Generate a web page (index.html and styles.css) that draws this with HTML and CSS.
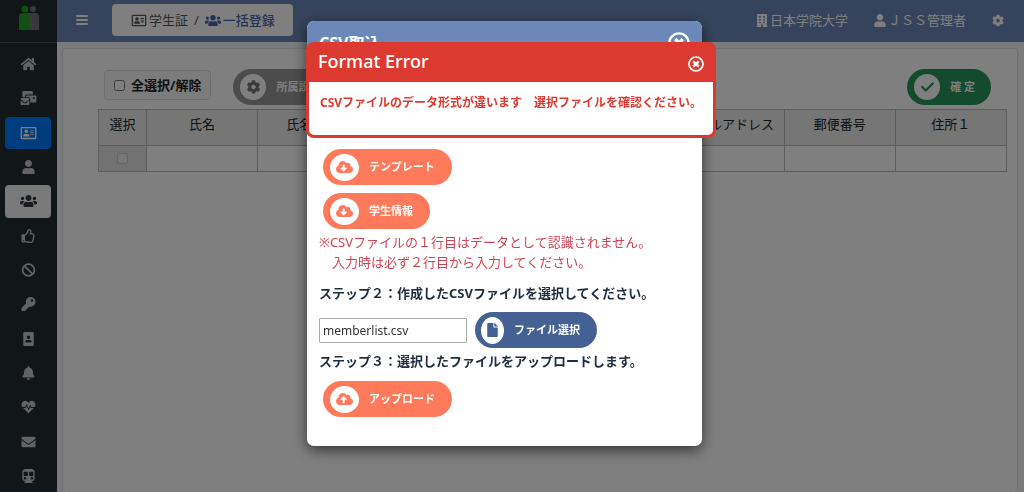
FILE: index.html
```html
<!DOCTYPE html>
<html lang="ja">
<head>
<meta charset="utf-8">
<title>一括登録</title>
<link rel="stylesheet" href="styles.css">
</head>
<body>
<svg class="sprite" aria-hidden="true">
  <symbol id="home" viewBox="0 0 576 512"><path d="M280.37 148.26L96 300.11V464a16 16 0 0 0 16 16l112.06-.29a16 16 0 0 0 15.92-16V368a16 16 0 0 1 16-16h64a16 16 0 0 1 16 16v95.64a16 16 0 0 0 16 16.05L464 480a16 16 0 0 0 16-16V300L295.67 148.26a12.19 12.19 0 0 0-15.3 0zM571.6 251.47L488 182.56V44.05a12 12 0 0 0-12-12h-56a12 12 0 0 0-12 12v72.61L318.47 43a48 48 0 0 0-61 0L4.34 251.47a12 12 0 0 0-1.6 16.9l25.5 31A12 12 0 0 0 45.15 301l235.22-193.74a12.19 12.19 0 0 1 15.3 0L530.9 301a12 12 0 0 0 16.9-1.6l25.5-31a12 12 0 0 0-1.7-16.93z"/></symbol>
  <symbol id="mails" viewBox="0 0 576 512"><path d="M160 448c-25.6 0-51.2-22.4-64-32-64-44.8-83.2-60.8-96-70.4V480c0 17.67 14.33 32 32 32h256c17.67 0 32-14.33 32-32V345.6c-12.8 9.6-32 25.6-96 70.4-12.8 9.6-38.4 32-64 32zm128-192H32c-17.67 0-32 14.33-32 32v16c25.6 19.2 22.4 19.2 115.2 86.4 9.6 6.4 28.8 25.6 44.8 25.6s35.2-19.2 44.8-22.4c92.8-67.2 89.6-67.2 115.2-86.4V288c0-17.67-14.33-32-32-32zm256-96H224c-17.67 0-32 14.33-32 32v32h96c33.21 0 60.59 25.42 63.71 57.82l.29-.22V416h192c17.67 0 32-14.33 32-32V192c0-17.67-14.33-32-32-32zm-32 128h-64v-64h64v64zm-352-96c0-35.29 28.71-64 64-64h224V32c0-17.67-14.33-32-32-32H96C78.33 0 64 14.33 64 32v192h96v-32z"/></symbol>
  <symbol id="card" viewBox="0 0 576 512"><path d="M528 32H48C21.5 32 0 53.5 0 80v352c0 26.5 21.5 48 48 48h480c26.5 0 48-21.5 48-48V80c0-26.5-21.5-48-48-48zm0 400H48V80h480v352zM208 256c35.3 0 64-28.7 64-64s-28.7-64-64-64-64 28.7-64 64 28.7 64 64 64zm-89.6 128h179.2c12.4 0 22.4-8.6 22.4-19.2v-19.2c0-31.8-30.1-57.6-67.2-57.6-10.8 0-18.7 8-44.8 8-26.9 0-33.4-8-44.8-8-37.1 0-67.2 25.8-67.2 57.6v19.2c0 10.6 10 19.2 22.4 19.2zM360 320h112c4.4 0 8-3.6 8-8v-16c0-4.4-3.6-8-8-8H360c-4.4 0-8 3.6-8 8v16c0 4.4 3.6 8 8 8zm0-64h112c4.4 0 8-3.6 8-8v-16c0-4.4-3.6-8-8-8H360c-4.4 0-8 3.6-8 8v16c0 4.4 3.6 8 8 8zm0-64h112c4.4 0 8-3.6 8-8v-16c0-4.4-3.6-8-8-8H360c-4.4 0-8 3.6-8 8v16c0 4.4 3.6 8 8 8z"/></symbol>
  <symbol id="user" viewBox="0 0 448 512"><path d="M224 256c70.7 0 128-57.3 128-128S294.7 0 224 0 96 57.3 96 128s57.3 128 128 128zm89.6 32h-16.7c-22.2 10.2-46.9 16-72.9 16s-50.6-5.8-72.9-16h-16.7C60.2 288 0 348.2 0 422.4V464c0 26.5 21.5 48 48 48h352c26.5 0 48-21.5 48-48v-41.6c0-74.2-60.2-134.4-134.4-134.4z"/></symbol>
  <symbol id="users" viewBox="0 0 640 512"><path d="M96 224c35.3 0 64-28.7 64-64s-28.7-64-64-64-64 28.7-64 64 28.7 64 64 64zm448 0c35.3 0 64-28.7 64-64s-28.7-64-64-64-64 28.7-64 64 28.7 64 64 64zm32 32h-64c-17.6 0-33.5 7.1-45.1 18.6 40.3 22.1 68.9 62 75.1 109.4h66c17.7 0 32-14.3 32-32v-32c0-35.3-28.7-64-64-64zm-256 0c61.9 0 112-50.1 112-112S381.9 32 320 32 208 82.1 208 144s50.1 112 112 112zm76.8 32h-8.3c-20.8 10-43.9 16-68.5 16s-47.6-6-68.5-16h-8.3C179.6 288 128 339.6 128 403.2V432c0 26.5 21.5 48 48 48h288c26.5 0 48-21.5 48-48v-28.8c0-63.6-51.6-115.2-115.2-115.2zm-223.7-13.4C161.5 263.1 145.6 256 128 256H64c-35.3 0-64 28.7-64 64v32c0 17.7 14.3 32 32 32h65.9c6.3-47.4 34.9-87.3 75.2-109.4z"/></symbol>
  <symbol id="thumb" viewBox="0 0 512 512"><path d="M466.27 286.69C475.04 271.84 480 256 480 236.85c0-44.015-37.218-85.58-85.82-85.58H357.7c4.92-12.81 8.85-28.13 8.85-46.54C366.55 31.936 328.86 0 271.28 0c-61.607 0-58.093 94.933-71.76 108.6-22.747 22.747-49.615 66.447-68.76 83.4H32c-17.673 0-32 14.327-32 32v240c0 17.673 14.327 32 32 32h64c14.893 0 27.408-10.174 30.978-23.95 44.509 1.001 75.06 39.94 177.802 39.94 7.22 0 15.22.01 22.22.01 77.117 0 111.986-39.423 112.94-95.33 13.319-18.425 20.299-43.122 17.34-66.99 9.854-18.452 13.664-40.343 8.99-62.99zm-61.75 53.83c12.56 21.13 1.26 49.41-13.94 57.57 7.7 48.78-17.608 65.9-53.12 65.9h-37.82c-71.639 0-118.029-37.82-171.64-37.82V240h10.92c28.36 0 67.98-70.89 94.54-97.46 28.36-28.36 18.91-75.63 37.82-94.54 47.27 0 47.27 32.98 47.27 56.73 0 39.17-28.36 56.72-28.36 94.54h103.99c21.11 0 37.73 18.91 37.82 37.82.09 18.9-12.82 37.81-22.27 37.81 13.489 14.555 16.371 45.236-5.21 65.62zM88 432c0 13.255-10.745 24-24 24s-24-10.745-24-24 10.745-24 24-24 24 10.745 24 24z"/></symbol>
  <symbol id="ban" viewBox="0 0 512 512"><g fill="none" stroke="currentColor" stroke-width="64"><circle cx="256" cy="256" r="216"/><path d="M104 104l304 304"/></g></symbol>
  <symbol id="key" viewBox="0 0 512 512"><path d="M512 176.001C512 273.203 433.202 352 336 352c-11.22 0-22.19-1.062-32.827-3.069l-24.012 27.014A23.999 23.999 0 0 1 261.223 384H224v40c0 13.255-10.745 24-24 24h-40v40c0 13.255-10.745 24-24 24H24c-13.255 0-24-10.745-24-24v-78.059c0-6.365 2.529-12.47 7.029-16.971l161.802-161.802C163.108 213.814 160 195.271 160 176 160 78.798 238.797.001 335.999 0 433.488-.001 512 78.511 512 176.001zM336 128c0 26.51 21.49 48 48 48s48-21.49 48-48-21.49-48-48-48-48 21.49-48 48z"/></symbol>
  <symbol id="portrait" viewBox="0 0 384 512"><path d="M336 0H48C21.5 0 0 21.5 0 48v416c0 26.5 21.5 48 48 48h288c26.5 0 48-21.5 48-48V48c0-26.5-21.5-48-48-48zM192 128c35.3 0 64 28.7 64 64s-28.7 64-64 64-64-28.7-64-64 28.7-64 64-64zm112 236.8c0 10.6-10 19.2-22.4 19.2H102.4C90 384 80 375.4 80 364.8v-19.2c0-31.8 30.1-57.6 67.2-57.6h5c12.3 5.1 25.7 8 39.8 8s27.6-2.9 39.8-8h5c37.1 0 67.2 25.8 67.2 57.6v19.2z"/></symbol>
  <symbol id="bell" viewBox="0 0 448 512"><path d="M224 512c35.32 0 63.97-28.65 63.97-64H160.03c0 35.35 28.65 64 63.97 64zm215.39-149.71c-19.32-20.76-55.47-51.99-55.47-154.29 0-77.7-54.48-139.9-127.94-155.16V32c0-17.67-14.32-32-31.98-32s-31.98 14.33-31.98 32v20.84C118.56 68.1 64.08 130.3 64.08 208c0 102.3-36.15 133.53-55.47 154.29-6 6.45-8.66 14.16-8.61 21.71.11 16.4 12.98 32 32.1 32h383.8c19.12 0 32-15.6 32.1-32 .05-7.55-2.61-15.27-8.61-21.71z"/></symbol>
  <symbol id="heart" viewBox="0 0 512 512"><path d="M320.2 243.8l-49.7 99.4c-6 12.1-23.4 11.7-28.9-.6l-56.9-126.3-30 71.7H60.6l182.5 186.5c7.1 7.3 18.6 7.3 25.7 0L451.4 288H342.3l-22.1-44.2zM473.7 73.9l-2.4-2.5c-51.5-52.6-135.8-52.6-187.4 0L256 100l-27.9-28.5c-51.5-52.7-135.9-52.7-187.4 0l-2.4 2.4C-10.4 123.7-12.5 203 31 256h102.4l35.9-86.2c5.4-12.9 23.6-13.1 29.4-.4l58.2 129.3 49-97.9c5.9-11.8 22.7-11.8 28.6 0l27.6 55.2H481c43.5-53 41.4-132.3-7.3-182.1z"/></symbol>
  <symbol id="mail" viewBox="0 0 512 512"><path d="M502.3 190.8c3.9-3.1 9.7-.2 9.7 4.7V400c0 26.5-21.5 48-48 48H48c-26.5 0-48-21.5-48-48V195.6c0-5 5.7-7.8 9.7-4.7 22.4 17.4 52.1 39.5 154.1 113.6 21.1 15.4 56.7 47.8 92.2 47.6 35.7.3 72-32.8 92.3-47.6 102-74.1 131.6-96.3 154-113.7zM256 320c23.2.4 56.6-29.2 73.4-41.4 132.7-96.3 142.8-104.7 173.4-128.7 5.8-4.5 9.2-11.5 9.2-18.9v-19c0-26.5-21.5-48-48-48H48c-26.5 0-48 21.5-48 48v19c0 7.4 3.4 14.3 9.2 18.9 30.6 23.9 40.7 32.4 173.4 128.7 16.8 12.2 50.2 41.8 73.4 41.4z"/></symbol>
  <symbol id="train" viewBox="0 0 448 512"><path d="M448 96v256c0 51.815-61.624 96-130.022 96l62.98 49.721C386.905 502.417 383.562 512 376 512H72c-7.578 0-10.892-9.594-4.957-14.279L130.022 448C61.82 448 0 403.954 0 352V96C0 42.981 64 0 128 0h192c65 0 128 42.981 128 96zM200 232V120c0-13.255-10.745-24-24-24H72c-13.255 0-24 10.745-24 24v112c0 13.255 10.745 24 24 24h104c13.255 0 24-10.745 24-24zm200 0V120c0-13.255-10.745-24-24-24H272c-13.255 0-24 10.745-24 24v112c0 13.255 10.745 24 24 24h104c13.255 0 24-10.745 24-24zm-48 56c-26.51 0-48 21.49-48 48s21.49 48 48 48 48-21.49 48-48-21.49-48-48-48zm-256 0c-26.51 0-48 21.49-48 48s21.49 48 48 48 48-21.49 48-48-21.49-48-48-48z"/></symbol>
  <symbol id="cog" viewBox="0 0 512 512"><path d="M487.4 315.7l-42.6-24.6c4.3-23.2 4.3-47 0-70.2l42.6-24.6c4.9-2.8 7.1-8.6 5.5-14-11.1-35.6-30-67.8-54.7-94.6-3.8-4.1-10-5.1-14.8-2.3L380.8 110c-17.9-15.4-38.5-27.3-60.8-35.1V25.8c0-5.6-3.9-10.5-9.4-11.7-36.7-8.2-74.3-7.8-109.2 0-5.5 1.2-9.4 6.1-9.4 11.7V75c-22.2 7.9-42.8 19.8-60.8 35.1L88.7 85.5c-4.9-2.8-11-1.9-14.8 2.3-24.7 26.7-43.6 58.9-54.7 94.6-1.7 5.4.6 11.2 5.5 14L67.3 221c-4.3 23.2-4.3 47 0 70.2l-42.6 24.6c-4.9 2.8-7.1 8.6-5.5 14 11.1 35.6 30 67.8 54.7 94.6 3.8 4.1 10 5.1 14.8 2.3l42.6-24.6c17.9 15.4 38.5 27.3 60.8 35.1v49.2c0 5.6 3.9 10.5 9.4 11.7 36.7 8.2 74.3 7.8 109.2 0 5.5-1.2 9.4-6.1 9.4-11.7v-49.2c22.2-7.9 42.8-19.8 60.8-35.1l42.6 24.6c4.9 2.8 11 1.9 14.8-2.3 24.7-26.7 43.6-58.9 54.7-94.6 1.5-5.5-.7-11.3-5.6-14.1zM256 336c-44.1 0-80-35.9-80-80s35.9-80 80-80 80 35.9 80 80-35.9 80-80 80z"/></symbol>
  <symbol id="download" viewBox="0 0 640 512"><path d="M537.6 226.6c4.1-10.7 6.4-22.4 6.4-34.6 0-53-43-96-96-96-19.7 0-38.1 6-53.3 16.2C367 64.2 315.3 32 256 32c-88.4 0-160 71.6-160 160 0 2.7.1 5.4.2 8.1C40.2 219.8 0 273.2 0 336c0 79.5 64.5 144 144 144h368c70.7 0 128-57.3 128-128 0-61.9-44-113.6-102.4-125.4zm-132.9 88.7L299.3 420.7c-6.2 6.2-16.4 6.2-22.6 0L171.3 315.3c-10.1-10.1-2.9-27.3 11.3-27.3H248V176c0-8.8 7.2-16 16-16h48c8.8 0 16 7.2 16 16v112h65.4c14.2 0 21.4 17.2 11.3 27.3z"/></symbol>
  <symbol id="upload" viewBox="0 0 640 512"><path d="M537.6 226.6c4.1-10.7 6.4-22.4 6.4-34.6 0-53-43-96-96-96-19.7 0-38.1 6-53.3 16.2C367 64.2 315.3 32 256 32c-88.4 0-160 71.6-160 160 0 2.7.1 5.4.2 8.1C40.2 219.8 0 273.2 0 336c0 79.5 64.5 144 144 144h368c70.7 0 128-57.3 128-128 0-61.9-44-113.6-102.4-125.4zM393.4 288H328v112c0 8.8-7.2 16-16 16h-48c-8.8 0-16-7.2-16-16V288h-65.4c-14.3 0-21.4-17.2-11.3-27.3l105.4-105.4c6.2-6.2 16.4-6.2 22.6 0l105.4 105.4c10.1 10.1 2.9 27.3-11.3 27.3z"/></symbol>
  <symbol id="building" viewBox="0 0 448 512"><path fill-rule="evenodd" d="M32 0h384v480h32v32H256v-96h-64v96H0v-32h32zM112 80v64h64V80zm160 0v64h64V80zM112 192v64h64v-64zm160 0v64h64v-64zM112 304v64h64v-64zm160 0v64h64v-64z"/></symbol>
  <symbol id="file" viewBox="0 0 384 512"><path d="M224 136V0H24C11 0 0 11 0 24v464c0 13 11 24 24 24h336c13 0 24-11 24-24V160H248c-13 0-24-11-24-24zm160-14v6H256V0h6c6 0 12 3 17 7l98 98c4 5 7 11 7 17z"/></symbol>
  <symbol id="check" viewBox="0 0 16 16"><path d="M2 8l4 4 8-8" fill="none" stroke="currentColor" stroke-width="2.6" stroke-linecap="round" stroke-linejoin="round"/></symbol>
  <symbol id="close" viewBox="0 0 16 16"><g fill="none" stroke="currentColor"><circle cx="8" cy="8" r="7" stroke-width="1.7"/><path d="M5.3 5.3l5.4 5.4M10.7 5.3l-5.4 5.4" stroke-width="2.4"/></g></symbol>
</svg>

<div class="app">
  <aside class="sidebar">
    <a class="brand" href="#" aria-label="トップ">
      <svg viewBox="0 0 20 26"><g fill="#6f7377"><circle cx="14" cy="4" r="3"/><path d="M10 8h6q4 0 4 4v13H10z"/></g><g fill="#1fa51f"><circle cx="6" cy="4" r="3.3"/><path d="M4 8h6v17H0V12q0-4 4-4z"/></g></svg>
    </a>
    <nav class="menu">
      <a href="#" aria-label="ホーム"><svg><use href="#home"/></svg></a>
      <a href="#" aria-label="配信"><svg><use href="#mails"/></svg></a>
      <a href="#" class="active" aria-label="学生証"><svg><use href="#card"/></svg></a>
      <a href="#" aria-label="利用者"><svg><use href="#user"/></svg></a>
      <a href="#" class="current" aria-label="一括登録"><svg><use href="#users"/></svg></a>
      <a href="#" aria-label="承認"><svg><use href="#thumb"/></svg></a>
      <a href="#" aria-label="停止"><svg><use href="#ban"/></svg></a>
      <a href="#" aria-label="鍵"><svg><use href="#key"/></svg></a>
      <a href="#" aria-label="写真"><svg><use href="#portrait"/></svg></a>
      <a href="#" aria-label="通知"><svg><use href="#bell"/></svg></a>
      <a href="#" aria-label="健康"><svg><use href="#heart"/></svg></a>
      <a href="#" aria-label="メール"><svg><use href="#mail"/></svg></a>
      <a href="#" aria-label="通学"><svg><use href="#train"/></svg></a>
    </nav>
  </aside>

  <div class="page">
    <header class="navbar">
      <button class="burger" aria-label="メニュー"><span></span><span></span><span></span></button>
      <div class="crumbs">
        <a href="#"><svg><use href="#card"/></svg>学生証</a>
        <span>/</span>
        <a href="#" class="here"><svg><use href="#users"/></svg>一括登録</a>
      </div>
      <div class="account">
        <span><svg><use href="#building"/></svg>日本学院大学</span>
        <span><svg><use href="#user"/></svg>ＪＳＳ管理者</span>
        <button class="plain" aria-label="設定"><svg><use href="#cog"/></svg></button>
      </div>
    </header>

    <main class="card">
      <div class="toolbar">
        <label class="select-all"><input type="checkbox">全選択/解除</label>
        <button class="pill gray"><i><svg><use href="#cog"/></svg></i>所属設定</button>
        <button class="pill green"><i><svg><use href="#check"/></svg></i>確 定</button>
      </div>
      <div class="scroller">
        <table>
          <colgroup><col class="c-check"><col><col class="c-narrow"><col class="c-wide"><col class="c-wide"><col><col><col><col></colgroup>
          <thead><tr><th>選択</th><th>氏名</th><th>氏名</th><th></th><th></th><th>メールアドレス</th><th>郵便番号</th><th>住所１</th><th></th></tr></thead>
          <tbody><tr><td class="pick"><input type="checkbox" disabled aria-label="行を選択"></td><td></td><td></td><td></td><td></td><td></td><td></td><td></td><td></td></tr></tbody>
        </table>
      </div>
    </main>
  </div>
</div>

<div class="overlay">
  <section class="modal" role="dialog" aria-label="CSV取込">
    <header class="modal-head"><h2>CSV取込</h2><button class="plain" aria-label="閉じる"><svg><use href="#close"/></svg></button></header>
    <div class="modal-body">
      <div class="downloads">
        <button class="pill orange"><i><svg><use href="#download"/></svg></i>テンプレート</button>
        <button class="pill orange"><i><svg><use href="#download"/></svg></i>学生情報</button>
      </div>
      <p class="note">※CSVファイルの１行目はデータとして認識されません。<br>　入力時は必ず２行目から入力してください。</p>
      <label class="step" for="csv">ステップ２：作成したCSVファイルを選択してください。</label>
      <div class="file-row">
        <input id="csv" type="text" value="memberlist.csv">
        <button class="pill blue"><i><svg><use href="#file"/></svg></i>ファイル選択</button>
      </div>
      <p class="step">ステップ３：選択したファイルをアップロードします。</p>
      <div class="uploads"><button class="pill orange"><i><svg><use href="#upload"/></svg></i>アップロード</button></div>
    </div>

    <section class="alert" role="alertdialog" aria-label="Format Error">
      <header class="alert-head"><h2>Format Error</h2><button class="plain" aria-label="閉じる"><svg><use href="#close"/></svg></button></header>
      <p>CSVファイルのデータ形式が違います　選択ファイルを確認ください。</p>
    </section>
  </section>
</div>
</body>
</html>
```
FILE: styles.css
```css
* { box-sizing: border-box; }
body { margin: 0; overflow: hidden; font: 13px/20px "Noto Sans", "Noto Sans CJK JP", sans-serif; color: #212529; background: #f4f6f9; }
button, input { font: inherit; color: inherit; }
h2, p { margin: 0; }
a { color: inherit; text-decoration: none; }
svg { display: block; fill: currentColor; }
.sprite { display: none; }
.plain { padding: 0; border: 0; background: none; }

.app { display: flex; min-height: 100vh; }

.sidebar { display: flex; flex-direction: column; flex: 0 0 57px; background: #222d32; color: #c2c7d0; }
.brand { display: flex; justify-content: center; padding: 5px 0 11px; border-bottom: 1px solid #4b545c; }
.brand svg { width: 20px; height: 26px; }
.menu { flex: 1; display: grid; grid-auto-rows: 1fr; gap: 2px; padding: 5px 6px 0 5px; }
.menu a { display: grid; place-items: center; border-radius: 4px; }
.menu svg { width: 17px; height: 14px; }
.menu .active { background: #007bff; color: #fff; }
.menu .current { background: #f4f4f6; color: #343a40; }

.page { flex: 1; min-width: 0; display: flex; flex-direction: column; }
.navbar { display: flex; align-items: center; height: 42px; padding: 0 20px 2px 19px; background: #6b88b8; color: #fff; }
.burger { display: grid; gap: 2px; width: 12px; padding: 0; border: 0; background: none; }
.burger span { height: 2px; border-radius: 1px; background: #fff; }
.crumbs { display: flex; align-items: center; gap: 6px; height: 32px; margin-left: 24px; padding: 0 18px 0 19px; border-radius: 4px; background: #fff; color: #555; }
.crumbs a { display: flex; align-items: center; gap: 2px; }
.crumbs svg { width: 16px; height: 13px; }
.crumbs .here { color: #4668a4; font-weight: 500; }
.account { display: flex; align-items: center; gap: 26px; margin-left: auto; }
.account span { display: flex; align-items: center; gap: 2px; }
.account svg { width: 12px; height: 13px; }

.card { flex: 1; margin: 7px 7px 0 6px; padding: 20px 10px 0 35px; border-radius: 3px; background: #fff; box-shadow: 0 0 2px rgba(0, 0, 0, .3); }
.toolbar { display: flex; align-items: center; gap: 22px; padding: 0 16px 4px 6px; }
.select-all { display: flex; align-items: center; gap: 6px; height: 30px; margin-bottom: 4px; padding: 0 9px; border: 1px solid #ddd; border-radius: 4px; background: #f8f9fa; font-weight: bold; }
input[type=checkbox] { width: 11px; height: 11px; margin: 0; }
.scroller { overflow: hidden; }
table { width: 1020px; table-layout: fixed; border-collapse: collapse; }
col { width: 111px; }
.c-check { width: 48px; }
.c-narrow { width: 83px; }
.c-wide { width: 166px; }
th, td { padding: 4px 0; border: 1px solid #bbb; }
th { height: 36px; background: #ededed; font-weight: normal; vertical-align: top; }
td { height: 26px; }
.pick { background: #e4e4e4; text-align: center; line-height: 10px; }

.pill { display: flex; align-items: center; gap: 10px; height: 36px; padding: 0 17px 0 7px; border: 0; border-radius: 18px; color: #fff; font-size: 11px; font-weight: bold; white-space: nowrap; }
.pill i { display: grid; place-items: center; width: 29px; height: 27px; border-radius: 50%; background: #fff; }
.pill svg { width: 17px; height: 14px; }
.gray { background: #989898; }
.gray i { color: #777; }
.green { margin-left: auto; padding-right: 16px; background: #28945b; }
.green i { color: #28945b; }
.green i, .gray i { width: 26px; height: 26px; }
.orange { background: #ff7a5a; }
.orange i { color: #ff7a5a; }
.blue { padding-left: 6px; background: #456093; }
.blue i { width: 23px; color: #456093; }

.overlay { position: fixed; inset: 0; display: flex; align-items: flex-start; justify-content: center; padding: 21px 15px 0 0; background: rgba(0, 0, 0, .5); }
.modal { position: relative; flex: 0 1 395px; border-radius: 7px; background: #fff; box-shadow: 0 4px 14px rgba(0, 0, 0, .6); }
.modal-head { display: flex; align-items: center; justify-content: space-between; height: 44px; padding: 0 12px; border-radius: 7px 7px 0 0; background: #6b88b8; color: #fff; }
.modal-head h2 { font-size: 16px; font-weight: bold; }
.modal-head svg { width: 22px; height: 22px; }
.modal-body { padding: 84px 12px 29px; color: #1f2d3d; }
.downloads { display: grid; justify-items: start; gap: 8px; padding: 0 4px; }
.note { margin: 3px 0 11px; color: #cf4455; }
.step { display: block; font-weight: bold; }
.file-row { display: flex; align-items: center; gap: 8px; margin: 9px 0 3px; }
.file-row input { width: 148px; height: 25px; padding: 0 3px; border: 1px solid #aaa; border-radius: 1px; color: #333; background: #fff; font-size: 12px; }
.uploads { margin-top: 10px; padding: 0 4px; }

.alert { position: absolute; top: 21px; left: -1px; right: -14px; min-height: 96px; border: 3px solid #dc3a30; border-radius: 8px; background: #fff; }
.alert-head { display: flex; align-items: center; justify-content: space-between; height: 37px; padding: 0 9px; background: #dc3a30; color: #fff; }
.alert-head h2 { font-size: 18px; font-weight: 500; line-height: 32px; align-self: flex-start; }
.alert-head svg { width: 16px; height: 16px; }
.alert p { padding: 11px; color: #dc3a30; font-size: 12px; font-weight: bold; white-space: nowrap; }
```
